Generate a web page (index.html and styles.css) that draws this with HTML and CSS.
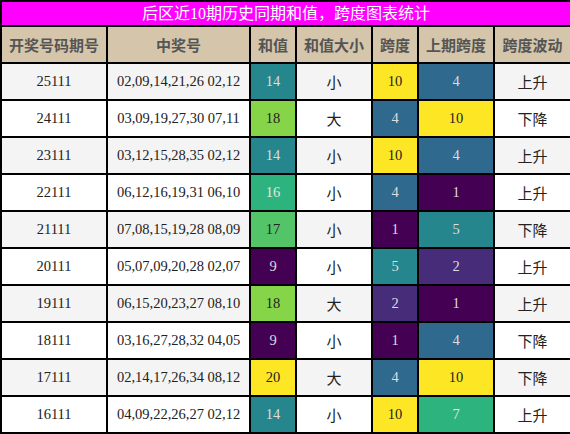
FILE: index.html
```html
<!DOCTYPE html>
<html lang="zh-CN">
<head>
    <meta charset="UTF-8">
    <meta name="viewport" content="width=device-width, initial-scale=1.0">
    <title>后区和值跨度统计</title>
    <link rel="stylesheet" href="styles.css">
</head>
<body>
    <table class="stats">
        <colgroup>
            <col class="c-issue">
            <col class="c-nums">
            <col class="c-sum">
            <col class="c-size">
            <col class="c-span">
            <col class="c-prev">
            <col class="c-trend">
        </colgroup>
        <thead>
            <tr class="title-row">
                <th colspan="7">后区近10期历史同期和值，跨度图表统计</th>
            </tr>
            <tr class="head-row">
                <th>开奖号码期号</th>
                <th>中奖号</th>
                <th>和值</th>
                <th>和值大小</th>
                <th>跨度</th>
                <th>上期跨度</th>
                <th>跨度波动</th>
            </tr>
        </thead>
        <tbody id="rows"></tbody>
    </table>

    <script>
        const rows = [
            ['25111', '02,09,14,21,26 02,12', 14, '小', 10, 4, '上升'],
            ['24111', '03,09,19,27,30 07,11', 18, '大', 4, 10, '下降'],
            ['23111', '03,12,15,28,35 02,12', 14, '小', 10, 4, '上升'],
            ['22111', '06,12,16,19,31 06,10', 16, '小', 4, 1, '上升'],
            ['21111', '07,08,15,19,28 08,09', 17, '小', 1, 5, '下降'],
            ['20111', '05,07,09,20,28 02,07', 9, '小', 5, 2, '上升'],
            ['19111', '06,15,20,23,27 08,10', 18, '大', 2, 1, '上升'],
            ['18111', '03,16,27,28,32 04,05', 9, '小', 1, 4, '下降'],
            ['17111', '02,14,17,26,34 08,12', 20, '大', 4, 10, '下降'],
            ['16111', '04,09,22,26,27 02,12', 14, '小', 10, 7, '上升']
        ];

        // colour classes, viridis style
        const sumColor = { 9: 'v0', 14: 'v4', 16: 'v6', 17: 'v7', 18: 'v8', 20: 'v9' };
        const spanColor = { 1: 'v0', 2: 'v1', 4: 'v3', 5: 'v4', 7: 'v6', 10: 'v9' };

        document.getElementById('rows').innerHTML = rows.map((r, i) => `
            <tr class="${i % 2 === 0 ? 'odd' : 'even'}">
                <td>${r[0]}</td>
                <td>${r[1]}</td>
                <td class="${sumColor[r[2]]}">${r[2]}</td>
                <td class="cjk">${r[3]}</td>
                <td class="${spanColor[r[4]]}">${r[4]}</td>
                <td class="${spanColor[r[5]]}">${r[5]}</td>
                <td class="cjk">${r[6]}</td>
            </tr>
        `).join('');
    </script>
</body>
</html>
```

FILE: styles.css
```css
body {
    margin: 0;
    background: white;
    font-family: 'Liberation Serif', 'Noto Sans CJK SC', serif;
    color: #222;
}
.stats {
    border-collapse: collapse;
    width: 570px;
    table-layout: fixed;
}
.c-issue { width: 106px; }
.c-nums { width: 143px; }
.c-sum { width: 46px; }
.c-size { width: 76px; }
.c-span { width: 46px; }
.c-prev { width: 76px; }
.c-trend { width: 77px; }
.stats th,
.stats td {
    border: 2px solid #000;
    text-align: center;
    padding: 0;
}
.title-row th {
    height: 23px;
    background: #ff00ff;
    color: #fff;
    font-weight: normal;
    font-size: 16px;
    line-height: 20px;
}
.head-row th {
    height: 35px;
    background: #d5c5aa;
    color: #555;
    font-family: 'Noto Sans CJK SC', sans-serif;
    font-weight: bold;
    font-size: 15px;
}
.stats td {
    height: 35px;
    font-size: 14.5px;
}
.stats td.cjk {
    font-family: 'Noto Sans CJK SC', sans-serif;
    font-size: 15px;
}
tr.odd td { background: #f4f4f4; }
tr.even td { background: #fff; }

/* viridis cells */
tr td.v0 { background: #440154; color: #ddd; }
tr td.v1 { background: #472c7a; color: #ddd; }
tr td.v3 { background: #30698e; color: #ddd; }
tr td.v4 { background: #25878d; color: #ddd; }
tr td.v6 { background: #2db37d; color: #e4e4e4; }
tr td.v7 { background: #53c568; color: #222; }
tr td.v8 { background: #86d549; color: #222; }
tr td.v9 { background: #fde725; color: #222; }
```
